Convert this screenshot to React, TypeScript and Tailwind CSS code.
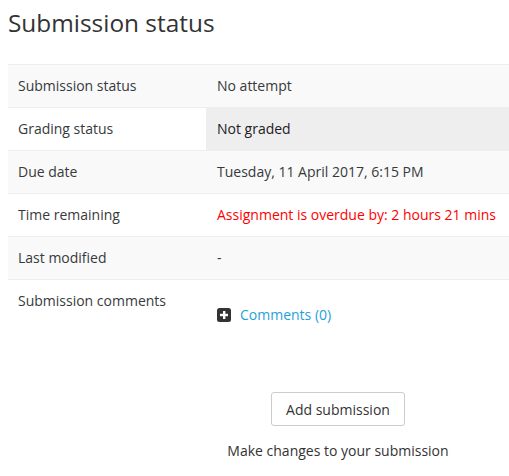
import React from 'react';

const rows: { label: string; value: React.ReactNode; valueClass?: string; shaded: boolean }[] = [
  { label: 'Submission status', value: 'No attempt', shaded: true },
  { label: 'Grading status', value: 'Not graded', valueClass: 'bg-[#eeeeee] text-[#1d2125]', shaded: false },
  { label: 'Due date', value: 'Tuesday, 11 April 2017, 6:15 PM', shaded: true },
  { label: 'Time remaining', value: 'Assignment is overdue by: 2 hours 21 mins', valueClass: 'text-[#ff0000]', shaded: false },
  { label: 'Last modified', value: '-', shaded: true },
];

const PlusBox = () => (
  <svg width="14" height="14" viewBox="0 0 14 14" className="shrink-0">
    <rect x="0" y="0" width="14" height="14" rx="2.5" fill="#333333" />
    <rect x="6" y="3" width="2.4" height="8" fill="#ffffff" />
    <rect x="3" y="5.8" width="8" height="2.4" fill="#ffffff" />
  </svg>
);

export default function App() {
  return (
    <div className="w-[509px] h-[476px] bg-white text-[#373a3c] font-['Open_Sans',sans-serif] overflow-hidden">
      <h2 className="pl-2 pt-[7px] text-[24.4px] leading-[32px] font-normal text-[#333]">Submission status</h2>
      <table className="ml-2 mt-[25px] w-[501px] border-collapse text-[14px]">
        <tbody>
          {rows.map((r) => (
            <tr key={r.label} className={`h-[43px] border-t border-[#eceeef] ${r.shaded ? 'bg-[#f9f9f9]' : 'bg-white'}`}>
              <td className="w-[198px] pl-[10px] pb-[2px] align-middle">{r.label}</td>
              <td className={`pl-[11px] pb-[2px] align-middle ${r.valueClass ?? ''}`}>{r.value}</td>
            </tr>
          ))}
          <tr className="border-t border-[#eceeef]">
            <td className="pl-[10px] pt-[10px] pb-[22px] align-top">Submission comments</td>
            <td className="pl-[11px] pt-[24px] pb-[22px] align-top">
              <div className="flex items-center gap-[9px]">
                <PlusBox />
                <span className="text-[#1fa2d8]">Comments (0)</span>
              </div>
            </td>
          </tr>
        </tbody>
      </table>
      <div className="mt-[45px] ml-[227px] w-[222px] flex flex-col items-center text-[14px]">
        <button className="h-[34px] px-[14px] border border-[#cccccc] rounded-[3px] bg-white text-[#333]">
          Add submission
        </button>
        <p className="mt-[14px] text-[#333]">Make changes to your submission</p>
      </div>
    </div>
  );
}
